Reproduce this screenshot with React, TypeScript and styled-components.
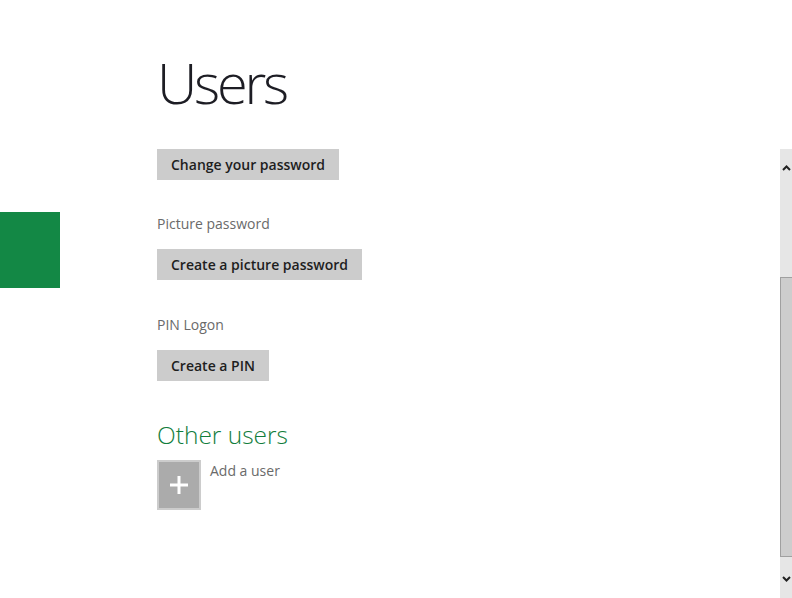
import styled, { createGlobalStyle } from "styled-components";

const GlobalStyle = createGlobalStyle`
  html, body {
    margin: 0;
    padding: 0;
    background: #ffffff;
    overflow: hidden;
  }
  body {
    font-family: "Segoe UI", "Open Sans", "Noto Sans", sans-serif;
  }
`;

const Page = styled.div`
  display: flex;
  width: 792px;
  height: 598px;
  overflow: hidden;
`;

const Side = styled.div`
  width: 60px;
  flex-shrink: 0;
  padding-top: 212px;
`;

const SelectedTile = styled.div`
  width: 60px;
  height: 76px;
  background: #138845;
`;

const Content = styled.div`
  flex: 1;
  padding-left: 97px;
  display: flex;
  flex-direction: column;
  align-items: flex-start;
`;

const Title = styled.h1`
  margin: 44px 0 0;
  font-size: 56px;
  font-weight: 300;
  line-height: 76px;
  color: #1d1d24;
  letter-spacing: -3.2px;
`;

const Button = styled.button<{ $top: number }>`
  height: 31px;
  margin-top: ${(p) => p.$top}px;
  padding: 0 14px;
  border: none;
  background: #cccccc;
  color: #1e1e1e;
  font-family: inherit;
  font-size: 14px;
  font-weight: 600;
  cursor: pointer;
`;

const Label = styled.div<{ $top: number }>`
  margin-top: ${(p) => p.$top}px;
  font-size: 14px;
  line-height: 20px;
  color: #6a6a6a;
`;

const Heading = styled.h2`
  margin: 38px 0 0;
  font-size: 24.5px;
  font-weight: 300;
  line-height: 32px;
  color: #127d3c;
`;

const AddRow = styled.div`
  display: flex;
  gap: 9px;
  margin-top: 9px;
`;

const AddTile = styled.div`
  width: 40px;
  height: 46px;
  border: 2px solid #cccccc;
  background: #ababab;
  display: flex;
  align-items: center;
  justify-content: center;
`;

const AddText = styled.div`
  margin-top: 1px;
  font-size: 14px;
  line-height: 20px;
  color: #6a6a6a;
`;

const ScrollBar = styled.div`
  width: 12px;
  flex-shrink: 0;
  margin-top: 149px;
  height: 449px;
  background: #e6e6e6;
  display: flex;
  flex-direction: column;
  align-items: center;
`;

const Arrow = styled.div`
  height: 38px;
  width: 100%;
  display: flex;
  align-items: center;
  justify-content: center;
`;

const Thumb = styled.div`
  width: 100%;
  box-sizing: border-box;
  height: 280px;
  margin-top: 90px;
  background: #cdcdcd;
  border-top: 1px solid #a0a0a0;
  border-left: 1px solid #a0a0a0;
  border-bottom: 1px solid #a0a0a0;
`;

const Spacer = styled.div`
  flex: 1;
`;

const Chevron = ({ up }: { up?: boolean }) => (
  <svg width="9" height="6" viewBox="0 0 9 6">
    <path
      d={up ? "M1 5 L4.5 1.5 L8 5" : "M1 1 L4.5 4.5 L8 1"}
      fill="none"
      stroke="#222"
      strokeWidth="2"
    />
  </svg>
);

export default function App() {
  return (
    <>
      <GlobalStyle />
      <Page>
        <Side>
          <SelectedTile />
        </Side>
        <Content>
          <Title>Users</Title>
          <Button $top={29}>Change your password</Button>
          <Label $top={34}>Picture password</Label>
          <Button $top={15}>Create a picture password</Button>
          <Label $top={35}>PIN Logon</Label>
          <Button $top={15}>Create a PIN</Button>
          <Heading>Other users</Heading>
          <AddRow>
            <AddTile>
              <svg width="20" height="20" viewBox="0 0 20 20">
                <path d="M10 1 V19 M1 10 H19" stroke="#ffffff" strokeWidth="3" />
              </svg>
            </AddTile>
            <AddText>Add a user</AddText>
          </AddRow>
        </Content>
        <ScrollBar>
          <Arrow>
            <Chevron up />
          </Arrow>
          <Thumb />
          <Spacer />
          <Arrow>
            <Chevron />
          </Arrow>
        </ScrollBar>
      </Page>
    </>
  );
}
